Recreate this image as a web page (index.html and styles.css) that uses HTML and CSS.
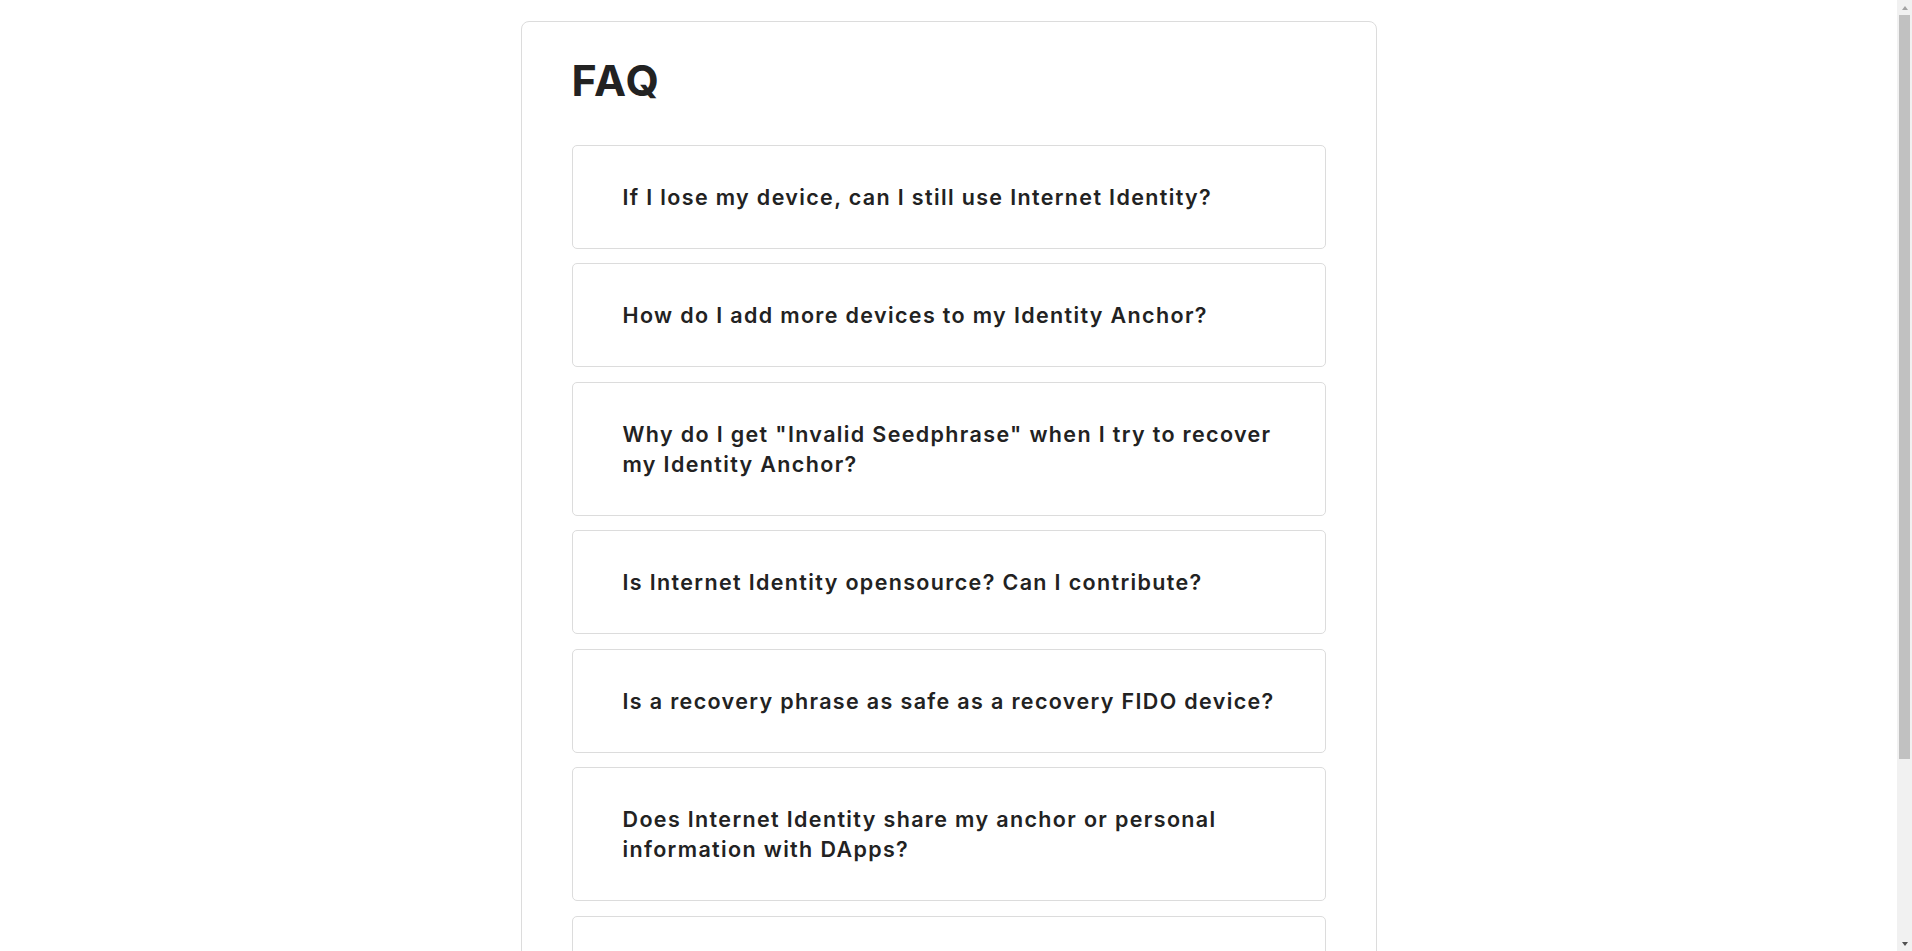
FILE: index.html
```html
<!DOCTYPE html>
<html lang="en">
<head>
<meta charset="utf-8">
<title>FAQ</title>
<link rel="stylesheet" href="styles.css">
</head>
<body>
<main class="page">
  <section class="card">
    <h1 class="title">FAQ</h1>
    <div class="faq-list">
      <details class="faq-item"><summary class="faq-question">If I lose my device, can I still use Internet Identity?</summary></details>
      <details class="faq-item"><summary class="faq-question">How do I add more devices to my Identity Anchor?</summary></details>
      <details class="faq-item"><summary class="faq-question">Why do I get "Invalid Seedphrase" when I try to recover my Identity Anchor?</summary></details>
      <details class="faq-item"><summary class="faq-question">Is Internet Identity opensource? Can I contribute?</summary></details>
      <details class="faq-item"><summary class="faq-question">Is a recovery phrase as safe as a recovery FIDO device?</summary></details>
      <details class="faq-item"><summary class="faq-question">Does Internet Identity share my anchor or personal information with DApps?</summary></details>
      <details class="faq-item"><summary class="faq-question">Why does Windows Hello not work?</summary></details>
      <details class="faq-item"><summary class="faq-question">Where can I learn more?</summary></details>
    </div>
  </section>
</main>
<div class="scrollbar" aria-hidden="true">
  <div class="sb-button"><span class="sb-arrow-up"></span></div>
  <div class="sb-track"><div class="sb-thumb"></div></div>
  <div class="sb-button"><span class="sb-arrow-down"></span></div>
</div>
</body>
</html>
```

FILE: styles.css
```css
* {
  box-sizing: border-box;
}

html, body {
  margin: 0;
  padding: 0;
  background: #ffffff;
}

::-webkit-scrollbar {
  display: none;
}

body {
  font-family: Inter, "Open Sans", "DejaVu Sans", sans-serif;
  color: #222222;
}

.page {
  padding: 21px 15px 21px 0;
}

.card {
  width: 856px;
  margin: 0 auto;
  border: 1px solid #dcdcdc;
  border-radius: 8px;
  padding: 33px 50px 16px;
  background: #ffffff;
}

.title {
  margin: 0 0 39.5px;
  font-size: 43px;
  line-height: 50.4px;
  font-weight: 700;
  color: #222222;
  letter-spacing: 1.2px;
}

.faq-list {
  display: flex;
  flex-direction: column;
  gap: 14.5px;
}

.faq-item {
  border: 1px solid #dcdcdc;
  border-radius: 5px;
  background: #ffffff;
}

.faq-question {
  display: block;
  list-style: none;
  padding: 36px 36px 36px 50px;
  font-size: 21.5px;
  line-height: 30px;
  font-weight: 600;
  letter-spacing: 1.35px;
  color: #222222;
  cursor: pointer;
}

.faq-question::-webkit-details-marker {
  display: none;
}

/* decorative classic scrollbar, drawn over the right edge */
.scrollbar {
  position: fixed;
  top: 0;
  right: 0;
  width: 15px;
  height: 100vh;
  background: #f1f1f1;
  display: flex;
  flex-direction: column;
}

.sb-button {
  height: 15px;
  flex: none;
  display: flex;
  align-items: center;
  justify-content: center;
}

.sb-arrow-up {
  width: 0;
  height: 0;
  border-left: 3.5px solid transparent;
  border-right: 3.5px solid transparent;
  border-bottom: 4px solid #a3a3a3;
}

.sb-arrow-down {
  width: 0;
  height: 0;
  border-left: 3.5px solid transparent;
  border-right: 3.5px solid transparent;
  border-top: 4px solid #505050;
}

.sb-track {
  flex: 1;
  padding: 0 2px;
}

.sb-thumb {
  height: 744px;
  background: #c1c1c1;
}
```
